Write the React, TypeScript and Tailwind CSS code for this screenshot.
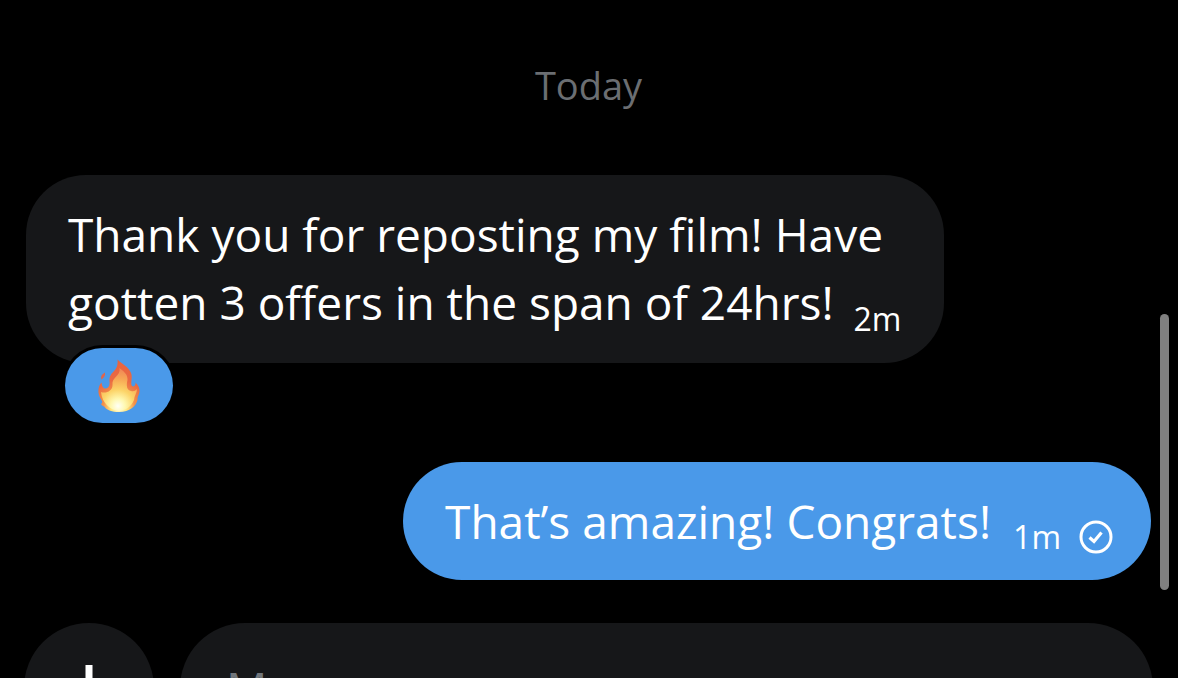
import React from "react";

function FireIcon() {
  return (
    <svg width="44" height="54" viewBox="0 0 44 54" role="img" aria-label="Fire">
      <defs>
        <radialGradient id="flame" cx="22" cy="48" r="46" gradientUnits="userSpaceOnUse">
          <stop offset="0" stopColor="#fffef0" />
          <stop offset="0.18" stopColor="#ffe680" />
          <stop offset="0.34" stopColor="#f3924a" />
          <stop offset="0.6" stopColor="#ea6a42" />
          <stop offset="1" stopColor="#e8633f" />
        </radialGradient>
        <radialGradient id="flameCore" cx="21" cy="47" r="36" gradientUnits="userSpaceOnUse">
          <stop offset="0" stopColor="#fffff6" />
          <stop offset="0.2" stopColor="#fff8b0" />
          <stop offset="0.45" stopColor="#fcd468" />
          <stop offset="0.75" stopColor="#f7a855" />
          <stop offset="1" stopColor="#f18a55" />
        </radialGradient>
      </defs>
      <path
        d="M20.500 0.500C25 5 32 8 34 14C36 19 33 24 35 27C37 28.500 39 26 38.500 23.500C41 26 43 29 42.500 33C42 36 40 38 40.500 41C39 47 33 53 22 53C15 53 10 51 8 48.500C7 47 5 47 4 45C5 44 5.500 44 5 42C2 38 1 34 1.500 30C2 27 3 25 4.500 23.500C5 27 6 29.500 8.500 29.500C12 29 13 26 12.500 22C12 12 22 13 20.500 0.500Z"
        fill="url(#flame)"
      />
      <path
        d="M22.500 9C26 12 31 15 30.500 21C29 27 30 31 34 32C37 33 39 31 40 30C40 34 37 37 37 41C34 48 29 51 22 52C13 51 5 44 4 33C9 35 15.500 32 15.500 26C14.500 18 24 17 22.500 9Z"
        fill="url(#flameCore)"
      />
      <path d="M8 13.500C6 15 3 16.500 4.500 20.500C7 18.500 8.500 17 8 13.500Z" fill="#e0644b" />
    </svg>
  );
}

function SentIcon() {
  return (
    <svg width="34" height="34" viewBox="0 0 34 34" fill="none" role="img" aria-label="Sent">
      <circle cx="17" cy="17" r="15" stroke="currentColor" strokeWidth="3" />
      <path d="M10.500 17.500L15 21.500L22.500 12.500" stroke="currentColor" strokeWidth="3.200" />
    </svg>
  );
}

export default function App() {
  const [text, setText] = React.useState("");

  return (
    <div className="relative flex h-screen flex-col overflow-hidden bg-black font-['Open_Sans',sans-serif] text-white">
      <main className="flex shrink-0 flex-col pt-[55px] pr-[27px] pl-[26px]">
        <h2 className="text-center text-[38px] leading-[60px] text-[#6b6e72]">Today</h2>

        {/* Received message */}
        <div className="relative mt-[60px] self-start rounded-[60px] bg-[#161719] pt-[25px] pr-[43px] pb-[26px] pl-[42px]">
          <p className="text-[46px] leading-[68px]">
            Thank you for reposting my film! Have
            <br />
            gotten 3 offers in the span of 24hrs!
            <time className="ml-5 align-[-11px] text-[32px] leading-9">2m</time>
          </p>
          <button
            type="button"
            aria-label="Fire reaction"
            className="absolute top-[173px] left-[39px] flex h-[75px] w-[108px] items-center justify-center rounded-full bg-[#4a99e9] ring-3 ring-black"
          >
            <FireIcon />
          </button>
        </div>

        {/* Sent message */}
        <div className="mt-[99px] flex items-end gap-[22px] self-end rounded-[60px] bg-[#4a99e9] py-[25px] pr-[38px] pl-[42px]">
          <p className="text-[46px] leading-[68px]">That’s amazing! Congrats!</p>
          <div className="flex items-center gap-[18px]">
            <time className="text-[32px] leading-9">1m</time>
            <SentIcon />
          </div>
        </div>
      </main>

      {/* Composer */}
      <form
        className="mt-[43px] flex shrink-0 gap-[26px] pr-[25px] pl-6"
        onSubmit={(e) => e.preventDefault()}
      >
        <button
          type="button"
          aria-label="Add attachment"
          className="flex size-[130px] shrink-0 items-center justify-center rounded-full bg-[#161719]"
        >
          <svg width="46" height="46" viewBox="0 0 46 46" fill="none">
            <path d="M23 0V46M0 23H46" stroke="currentColor" strokeWidth="7" />
          </svg>
        </button>
        <input
          type="text"
          aria-label="Message"
          placeholder="Message"
          value={text}
          onChange={(e) => setText(e.target.value)}
          className="h-[130px] min-w-0 flex-1 rounded-[65px] bg-[#161719] px-[46px] text-[46px] outline-none placeholder:text-[#71767b]"
        />
      </form>

      {/* Scroll indicator */}
      <div className="absolute top-[314px] right-[9px] h-[276px] w-[9px] rounded-full bg-[#808080]" />
    </div>
  );
}
